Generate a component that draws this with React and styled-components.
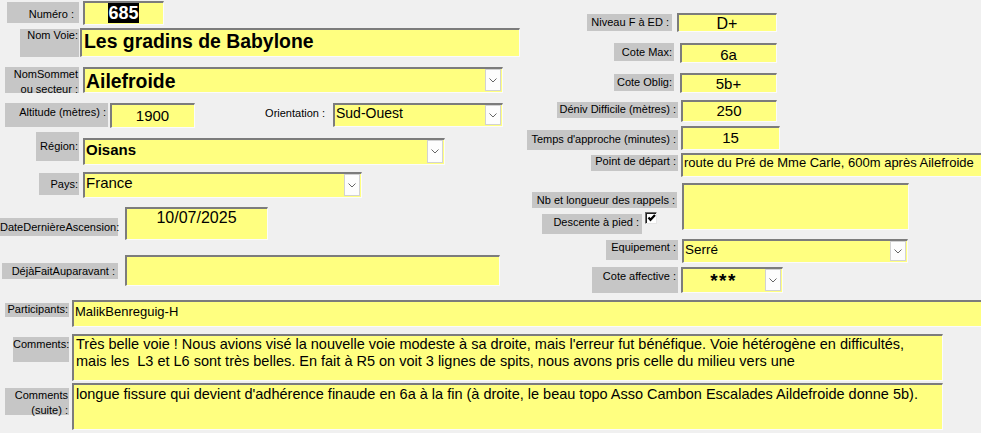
import React from "react";
import styled, { createGlobalStyle } from "styled-components";

const Global = createGlobalStyle`
  html, body { margin: 0; padding: 0; background: #f0f0f0; }
  #root { width: 981px; height: 433px; }
`;

const Form = styled.div`
  width: 981px;
  height: 433px;
  overflow: hidden;
  background: #f0f0f0;
  color: #000;
  font-family: "Liberation Sans", Arial, sans-serif;
`;

const Top = styled.div`
  display: grid;
  grid-template-columns: 525px 1fr;
  height: 300px;
`;

const Column = styled.div`
  display: flex;
  flex-direction: column;
  padding-top: ${(p) => p.$pt || 0}px;
`;

const Row = styled.div`
  display: flex;
  align-items: flex-start;
  flex: none;
  height: ${(p) => p.$h}px;
`;

const Label = styled.div`
  flex: none;
  box-sizing: border-box;
  width: ${(p) => p.$w}px;
  height: ${(p) => p.$h}px;
  margin-left: ${(p) => p.$dx || 0}px;
  margin-top: ${(p) => p.$dy || 0}px;
  padding: ${(p) => p.$pt || 0}px ${(p) => (p.$pr ?? 2)}px 0 0;
  background: ${(p) => (p.$plain ? "transparent" : "#c6c6c6")};
  font-size: 11px;
  line-height: ${(p) => p.$lh || 13}px;
  text-align: right;
  white-space: nowrap;
`;

const Field = styled.div`
  flex: none;
  box-sizing: border-box;
  display: flex;
  align-items: stretch;
  width: ${(p) => p.$w}px;
  height: ${(p) => p.$h}px;
  margin-left: ${(p) => p.$dx || 0}px;
  margin-top: ${(p) => p.$dy || 0}px;
  background: #ffff80;
  border-top: 2px solid #7c7c7c;
  border-left: 2px solid #7c7c7c;
  border-right: 1px solid #fbfbfb;
  border-bottom: 1px solid #fbfbfb;
  overflow: hidden;
`;

const Value = styled.div`
  flex: 1;
  min-width: 0;
  padding: ${(p) => p.$pt || 0}px 2px 0 ${(p) => p.$pl ?? 1}px;
  font-size: ${(p) => p.$size || 14}px;
  font-weight: ${(p) => (p.$bold ? 700 : 400)};
  line-height: ${(p) => (p.$lh ? `${p.$lh}px` : "normal")};
  letter-spacing: ${(p) => p.$ls || 0}px;
  text-align: ${(p) => p.$align || "left"};
  white-space: ${(p) => (p.$wrap ? "normal" : "nowrap")};
  overflow: hidden;
`;

const Selected = styled.span`
  background: #000;
  color: #fff;
`;

const DropButton = styled.div`
  flex: none;
  box-sizing: border-box;
  width: 16px;
  margin: 0 1px 1px 0;
  background: #fdfdfd;
  border: 1px solid #d2d2d2;
  display: flex;
  align-items: center;
  justify-content: center;
`;

const Group = styled.div`
  flex: none;
  width: 152px;
  display: flex;
  flex-direction: column;
`;

const InlineRow = styled.div`
  display: flex;
  align-items: flex-start;
  margin-left: ${(p) => p.$dx || 0}px;
  margin-top: ${(p) => p.$dy || 0}px;
`;

const CheckBox = styled.div`
  flex: none;
  box-sizing: border-box;
  width: 12px;
  height: 12px;
  margin-left: ${(p) => p.$dx || 0}px;
  margin-top: ${(p) => p.$dy || 0}px;
  background: #fff;
  border-top: 1px solid #6a6a6a;
  border-left: 1px solid #6a6a6a;
  border-right: 1px solid #e6e6e6;
  border-bottom: 1px solid #e6e6e6;
  box-shadow: inset 1px 1px 0 #202020;
  display: flex;
  align-items: center;
  justify-content: center;
`;

const Chevron = () => (
  <svg width="8" height="5" viewBox="0 0 8 5">
    <polyline points="0.5,0.5 4,4 7.5,0.5" fill="none" stroke="#666" strokeWidth="1" />
  </svg>
);

const Check = () => (
  <svg width="9" height="8" viewBox="0 0 9 8">
    <polyline points="1.5,3.5 3.5,5.8 8,1" fill="none" stroke="#000" strokeWidth="2.2" />
  </svg>
);

const Combo = ({ children, vp, ...rest }) => (
  <Field {...rest}>
    <Value {...vp}>{children}</Value>
    <DropButton>
      <Chevron />
    </DropButton>
  </Field>
);

export default function App() {
  return (
    <>
      <Global />
      <Form>
        <Top>
          <Column>
            <Row $h={28}>
              <Label $dx={7} $dy={2} $w={72} $h={21} $pt={6} $pr={5}>Numéro :</Label>
              <Field $dx={4} $dy={1} $w={81} $h={24}>
                <Value $size={18} $bold $align="center" $pt={0}>
                  <Selected>685</Selected>
                </Value>
              </Field>
            </Row>
            <Row $h={39}>
              <Label $dx={20} $dy={1} $w={59} $h={28} $pt={0} $pr={1}>Nom Voie:</Label>
              <Field $dx={1} $w={440} $h={29}>
                <Value $size={19.4} $bold $pl={2}>Les gradins de Babylone</Value>
              </Field>
            </Row>
            <Row $h={36}>
              <Label $dx={5} $w={74} $h={26} $pr={1} $lh={14.5}>
                NomSommet
                <br />
                ou secteur :
              </Label>
              <Combo $dx={4} $w={420} $h={26} vp={{ $size: 19.4, $bold: true, $pt: 1 }}>
                Ailefroide
              </Combo>
            </Row>
            <Row $h={29}>
              <Label $dx={5} $w={103} $h={24} $pt={3}>Altitude (mètres) :</Label>
              <Field $dx={2} $w={85} $h={25}>
                <Value $size={15} $align="center" $pt={2}>1900</Value>
              </Field>
              <Label $plain $dx={60} $dy={3} $w={72} $h={18} $pt={1}>Orientation :</Label>
              <Combo $dx={6} $w={170} $h={24} vp={{ $size: 14, $pt: 0 }}>
                Sud-Ouest
              </Combo>
            </Row>
            <Row $h={40}>
              <Label $dx={36} $w={43} $h={29} $pt={8} $pr={1}>Région:</Label>
              <Combo $dx={4} $dy={6} $w={362} $h={27} vp={{ $size: 15, $bold: true, $pt: 1 }}>
                Oisans
              </Combo>
            </Row>
            <Row $h={35}>
              <Label $dx={39} $dy={1} $w={40} $h={22} $pt={5} $pr={1}>Pays:</Label>
              <Combo $dx={4} $w={279} $h={26} vp={{ $size: 15, $pt: 0 }}>
                France
              </Combo>
            </Row>
            <Row $h={48}>
              <Label $dx={0} $dy={11} $w={118} $h={18} $pt={3} $pr={1}>DateDernièreAscension:</Label>
              <Field $dx={7} $w={143} $h={33}>
                <Value $size={16} $align="center" $pt={0}>10/07/2025</Value>
              </Field>
            </Row>
            <Row $h={45}>
              <Label $dx={2} $dy={8} $w={116} $h={16} $pt={2} $pr={3}>DéjàFaitAuparavant :</Label>
              <Field $dx={7} $w={375} $h={31}>
                <Value />
              </Field>
            </Row>
          </Column>

          <Column $pt={13}>
            <Row $h={30}>
              <Label $dx={62} $dy={1} $w={85} $h={17} $pt={2} $pr={3}>Niveau F à ED :</Label>
              <Field $dx={5} $w={100} $h={19}>
                <Value $size={16} $align="center" $pt={0}>D+</Value>
              </Field>
            </Row>
            <Row $h={30}>
              <Label $dx={89} $w={60} $h={18} $pt={3}>Cote Max:</Label>
              <Field $dx={6} $w={97} $h={20}>
                <Value $size={15} $align="center" $pt={1}>6a</Value>
              </Field>
            </Row>
            <Row $h={27}>
              <Label $dx={89} $dy={1} $w={60} $h={17} $pt={2}>Cote Oblig:</Label>
              <Field $dx={6} $w={97} $h={20}>
                <Value $size={15} $align="center" $pt={0}>5b+</Value>
              </Field>
            </Row>
            <Row $h={26}>
              <Label $dx={32} $dy={2} $w={121} $h={16} $pt={1}>Déniv Difficile (mètres) :</Label>
              <Field $dx={3} $w={96} $h={22}>
                <Value $size={15} $align="center" $pt={0}>250</Value>
              </Field>
            </Row>
            <Row $h={27}>
              <Label $dx={2} $dy={4} $w={151} $h={20} $pt={3}>Temps d'approche (minutes) :</Label>
              <Field $dx={3} $w={99} $h={24}>
                <Value $size={15} $align="center" $pt={1}>15</Value>
              </Field>
            </Row>
            <Row $h={30}>
              <Label $dx={66} $dy={2} $w={87} $h={16} $pt={0}>Point de départ :</Label>
              <Field $dx={3} $w={302} $h={24}>
                <Value $size={13} $pt={0}>route du Pré de Mme Carle, 600m après Ailefroide</Value>
              </Field>
            </Row>
            <Row $h={56}>
              <Group>
                <Label $dx={7} $dy={9} $w={145} $h={16} $pt={2}>Nb et longueur des rappels :</Label>
                <InlineRow $dx={17} $dy={4}>
                  <Label $dy={2} $w={100} $h={20} $pt={2} $pr={3}>Descente à pied :</Label>
                  <CheckBox $dx={3}>
                    <Check />
                  </CheckBox>
                </InlineRow>
              </Group>
              <Field $dx={5} $w={227} $h={47}>
                <Value />
              </Field>
            </Row>
            <Row $h={28}>
              <Label $dx={81} $dy={1} $w={72} $h={20} $pt={1}>Equipement :</Label>
              <Combo $dx={4} $w={226} $h={24} vp={{ $size: 13.5, $pt: 1 }}>
                Serré
              </Combo>
            </Row>
            <Row $h={33}>
              <Label $dx={67} $w={86} $h={26} $pt={3}>Cote affective :</Label>
              <Combo $dx={3} $w={102} $h={26} vp={{ $size: 19, $bold: true, $ls: 1.5, $align: "center", $pt: 1 }}>
                ***
              </Combo>
            </Row>
          </Column>
        </Top>

        <Column>
          <Row $h={34}>
            <Label $dx={5} $dy={3} $w={64} $h={14} $pt={0} $pr={1}>Participants:</Label>
            <Field $dx={3} $w={912} $h={27}>
              <Value $size={13} $pt={2}>MalikBenreguig-H</Value>
            </Field>
          </Row>
          <Row $h={49}>
            <Label $dx={13} $dy={3} $w={56} $h={25} $pt={1} $pr={1}>Comments:</Label>
            <Field $dx={3} $w={871} $h={47}>
              <Value $size={14.5} $lh={16.6} $wrap $pl={2} $pt={0}>
                Très belle voie ! Nous avions visé la nouvelle voie modeste à sa droite, mais l'erreur fut bénéfique. Voie hétérogène en difficultés,
                <br />
                mais les&nbsp; L3 et L6 sont très belles. En fait à R5 on voit 3 lignes de spits, nous avons pris celle du milieu vers une
              </Value>
            </Field>
          </Row>
          <Row $h={50}>
            <Label $dx={5} $dy={5} $w={64} $h={27} $pt={0} $pr={1} $lh={15}>
              Comments
              <br />
              (suite) :
            </Label>
            <Field $dx={3} $w={871} $h={47}>
              <Value $size={14.5} $lh={16.6} $wrap $pl={2} $pt={1}>
                longue fissure qui devient d'adhérence finaude en 6a à la fin (à droite, le beau topo Asso Cambon Escalades Aildefroide donne 5b).
              </Value>
            </Field>
          </Row>
        </Column>
      </Form>
    </>
  );
}
